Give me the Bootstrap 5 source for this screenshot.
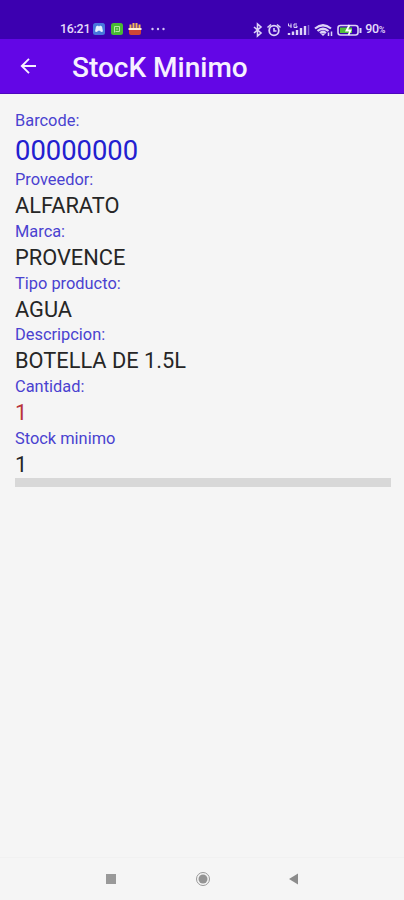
<!DOCTYPE html>
<html lang="es">
<head>
<meta charset="utf-8">
<meta name="viewport" content="width=device-width, initial-scale=1">
<title>StocK Minimo</title>
<link href="https://cdn.jsdelivr.net/npm/bootstrap@5.3.0/dist/css/bootstrap.min.css" rel="stylesheet">
<style>
body{font-family:Roboto,"Liberation Sans",sans-serif;background:#f5f5f5;height:900px;overflow:hidden}
.status{height:39px;background:#3c00b0;padding:19px 19px 0 60px;color:#e4dcfa}
.clock{font-size:12.5px;line-height:20px;font-weight:500;width:33px;letter-spacing:-.3px}
.batt{font-size:12.5px;line-height:20px;font-weight:500;letter-spacing:-.4px}
.batt span{font-size:9px}
.appbar{height:55px;background:#6306e6;padding-left:20px;border-bottom:1px solid #4d08bd}
.appbar h1{font-size:28px;font-weight:500;line-height:50px;color:#f6f0ff;margin-left:35px;padding-top:4px}
.fields{padding:16px 13px 0 15px}
.fields dt{font-size:16.4px;line-height:22px;height:22px;font-weight:400;color:#4a42d0}
.fields dd{font-size:21.8px;line-height:30px;height:29.700px;color:#262626;margin:0;white-space:nowrap}
.fields .code{font-size:27.4px;line-height:38px;height:37.200px;color:#2220d0}
.fields .qty{color:#b8343a}
.divider{height:9px;margin-top:-1.500px;background:#d8d8d8}
.sysnav{height:43px;border-top:1px solid #f1f1f1;padding:0 105px}
svg{display:block;flex:none}
</style>
<script src="https://cdn.jsdelivr.net/npm/bootstrap@5.3.0/dist/js/bootstrap.bundle.min.js"></script>
</head>
<body class="d-flex flex-column">
<div class="status d-flex align-items-start justify-content-between">
  <div class="d-flex align-items-center">
    <span class="clock">16:21</span>
    <svg width="76" height="20" viewBox="0 0 76 20">
      <rect x="0" y="4" width="12" height="12" rx="2.500" fill="#4778dc"/>
      <path d="M2 12.500l1-5 2-1 .5.700h1l.5-.7 2 1 1 5-2 .5-1-1.200h-2l-1 1.200z" fill="#e6f2ff"/>
      <rect x="18" y="4" width="12" height="12" rx="2.500" fill="#48b934"/>
      <path d="M21.500 13.500v-6h5v5h-4" fill="none" stroke="#b5e9a4"/><path d="M23 10h2" stroke="#b5e9a4"/>
      <path d="M36 9h12v5q0 2-2 2h-8q-2 0-2-2z" fill="#cf4635"/>
      <path d="M37.500 9V5.500M40.500 9V4M43.500 9V4M46.500 9V5.500" stroke="#f3bd54" stroke-width="2"/>
      <path d="M35.500 10h13" stroke="#fff0d8" stroke-width="2"/>
      <g fill="#d2c5f5"><circle cx="59.500" cy="10" r="1.200"/><circle cx="65" cy="10" r="1.200"/><circle cx="70.500" cy="10" r="1.200"/></g>
    </svg>
  </div>
  <div class="d-flex align-items-center">
    <svg width="112" height="20" viewBox="254 19 112 20" fill="none" stroke="#ddd3f8" stroke-width="1.600">
      <path d="M255 26l7 6-3.500 3V23l3.500 3-7 6"/>
      <circle cx="275" cy="29.500" r="4.800" stroke-width="1.800"/><path d="M275 27V30h2.500M268.500 26.500l3.500-3M281.500 26.500l-3.500-3"/>
      <path d="M289.500 22.500v2.500h3M292 22.500v4.500M298 23h-3v3.500h3v-1.500h-1.500" stroke-width="1"/>
      <path d="M290 34v-2M294 34v-3.500M298 34v-5M302 34v-7M306 34v-9" stroke-width="2.400"/>
      <path d="M309.500 34V24" stroke="#8562d2" stroke-width="1.500"/>
      <path d="M316 27.500q8-6.500 16 0M318.500 30q5.500-4.500 11 0M321 32q3-2.500 6 0" stroke-width="2.200"/><path d="M321.500 32.500h5l-2.500 2.500z" fill="#ddd3f8" stroke="none"/>
      <path d="M329.500 35v-3.500M332.500 35v-4.500" stroke-width="1.500"/>
      <rect x="339" y="24.500" width="20" height="9.500" rx="2.500"/><rect x="341" y="26.500" width="12" height="5.500" fill="#4fbe38" stroke="none"/>
      <path d="M350.500 24l-3 5.500h4l-2 4.500" stroke="#fff" stroke-width="1.800"/><path d="M361.500 27v5" stroke-width="2"/>
    </svg>
    <span class="batt">90<span>%</span></span>
  </div>
</div>
<header class="appbar d-flex align-items-center">
  <svg width="17" height="18" viewBox="0 0 17 18" fill="none" stroke="#f6f0ff" stroke-width="1.900"><path d="M16 9H2M9 1.800L1.800 9 9 16.200"/></svg>
  <h1 class="mb-0">StocK Minimo</h1>
</header>
<main class="fields flex-grow-1">
  <dl class="mb-0">
    <dt>Barcode:</dt><dd class="code">00000000</dd>
    <dt>Proveedor:</dt><dd>ALFARATO</dd>
    <dt>Marca:</dt><dd>PROVENCE</dd>
    <dt>Tipo producto:</dt><dd>AGUA</dd>
    <dt>Descripcion:</dt><dd>BOTELLA DE 1.5L</dd>
    <dt>Cantidad:</dt><dd class="qty">1</dd>
    <dt>Stock minimo</dt><dd>1</dd>
  </dl>
  <div class="divider"></div>
</main>
<footer class="sysnav d-flex align-items-center justify-content-between">
  <svg width="12" height="12"><rect x="1" y="1" width="10" height="10" fill="#999"/></svg>
  <svg width="16" height="16" viewBox="0 0 16 16"><circle cx="8" cy="8" r="6.500" fill="none" stroke="#999"/><circle cx="8" cy="8" r="4.500" fill="#949494"/></svg>
  <svg width="11" height="12"><path d="M1 6l9-5.500v11z" fill="#8c8c8c"/></svg>
</footer>
</body>
</html>
